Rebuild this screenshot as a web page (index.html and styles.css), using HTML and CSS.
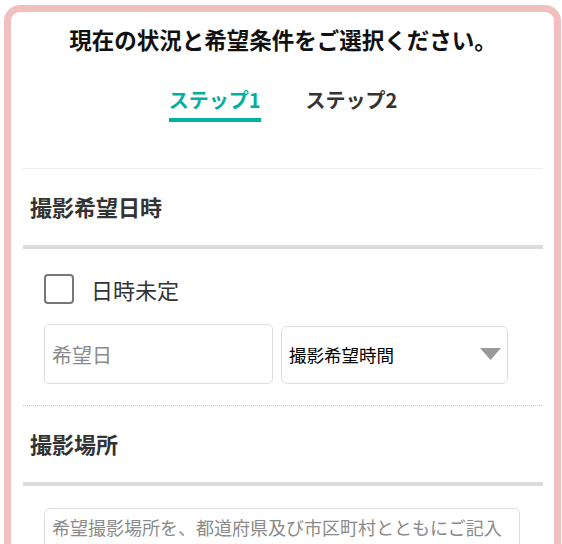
FILE: index.html
```html
<!DOCTYPE html>
<html lang="ja">
<head>
<meta charset="utf-8">
<title>ステップ1</title>
<link rel="stylesheet" href="styles.css">
</head>
<body>
<div class="card">
  <h1 class="title">現在の状況と希望条件をご選択ください。</h1>
  <div class="tabs">
    <div class="tab tab-active">ステップ1</div>
    <div class="tab">ステップ2</div>
  </div>
  <section class="section section-first">
    <h2 class="section-title">撮影希望日時</h2>
    <div class="section-body">
      <label class="check-row">
        <span class="checkbox"></span>
        <span class="check-label">日時未定</span>
      </label>
      <div class="field-row">
        <input class="date-input" type="text" placeholder="希望日">
        <div class="select">
          <span class="select-text">撮影希望時間</span>
          <svg class="select-arrow" width="21" height="12" viewBox="0 0 21 12"><polygon points="0,0 21,0 10.5,12" fill="#999"/></svg>
        </div>
      </div>
    </div>
  </section>
  <section class="section section-dotted">
    <h2 class="section-title">撮影場所</h2>
    <div class="section-body section-body-place">
      <textarea class="place-input" placeholder="希望撮影場所を、都道府県及び市区町村とともにご記入"></textarea>
    </div>
  </section>
</div>
</body>
</html>
```

FILE: styles.css
```css
html, body {
  margin: 0;
  padding: 0;
  overflow: hidden;
  background: #fff;
}

body {
  font-family: "Noto Sans CJK JP", "Noto Sans", sans-serif;
  color: #333;
}

.card {
  margin: 5px 1px 0 4px;
  border: 7px solid #f2bfbf;
  border-radius: 16px;
  background: #fff;
  padding: 11px 11px 80px 12px;
}

.title {
  margin: 0;
  font-size: 22.5px;
  line-height: 32px;
  font-weight: 700;
  color: #111;
  text-align: center;
}

.tabs {
  display: flex;
  justify-content: center;
  gap: 45px;
  margin-top: 31px;
}

.tab {
  font-size: 20px;
  line-height: 28px;
  font-weight: 700;
  color: #333;
  padding-bottom: 4px;
  border-bottom: 4px solid transparent;
}

.tab-active {
  color: #00afa0;
  border-bottom-color: #00afa0;
}

.section {
  padding-top: 21px;
}

.section-first {
  margin-top: 46px;
  border-top: 1px solid #ececec;
}

.section-dotted {
  border-top: 1px dotted #c8c8c8;
  margin-top: 21px;
  margin-right: 1px;
}

.section-title {
  margin: 0;
  padding: 0 0 23px 7px;
  font-size: 22px;
  line-height: 32px;
  font-weight: 700;
  color: #333;
  border-bottom: 4px solid #dcdcdc;
}

.section-dotted .section-title {
  margin-right: -1px;
}

.section-body {
  padding: 25px 0 0 21px;
}

.section-body-place {
  padding-top: 22px;
}

.check-row {
  display: flex;
  align-items: center;
  gap: 17px;
}

.checkbox {
  width: 26px;
  height: 26px;
  border: 2px solid #777;
  border-radius: 4px;
  flex: none;
}

.check-label {
  font-size: 22px;
  line-height: 30px;
  color: #333;
}

.field-row {
  display: flex;
  align-items: flex-start;
  gap: 8px;
  margin-top: 20px;
}

.date-input {
  box-sizing: border-box;
  width: 229px;
  height: 60px;
  margin: 0;
  padding: 0 7px;
  border: 1px solid #dedede;
  border-radius: 5px;
  font-family: "Noto Sans CJK JP", sans-serif;
  font-size: 20px;
  color: #333;
  background: #fff;
  outline: none;
}

.date-input::placeholder {
  color: #8a8a8a;
}

.select {
  box-sizing: border-box;
  width: 227px;
  height: 58px;
  margin-top: 2px;
  padding: 0 6px 0 7px;
  border: 1px solid #dedede;
  border-radius: 6px;
  display: flex;
  align-items: center;
  justify-content: space-between;
}

.select-text {
  font-size: 17.5px;
  line-height: 24px;
  color: #000;
}

.select-arrow {
  display: block;
  flex: none;
  margin-top: -2px;
}

.place-input {
  box-sizing: border-box;
  display: block;
  width: 476px;
  height: 100px;
  margin: 0;
  padding: 5px 7px;
  border: 1px solid #dedede;
  border-radius: 6px;
  font-family: "Noto Sans CJK JP", sans-serif;
  font-size: 18px;
  line-height: 27px;
  color: #333;
  resize: none;
  outline: none;
}

.place-input::placeholder {
  color: #8a8a8a;
}
```
